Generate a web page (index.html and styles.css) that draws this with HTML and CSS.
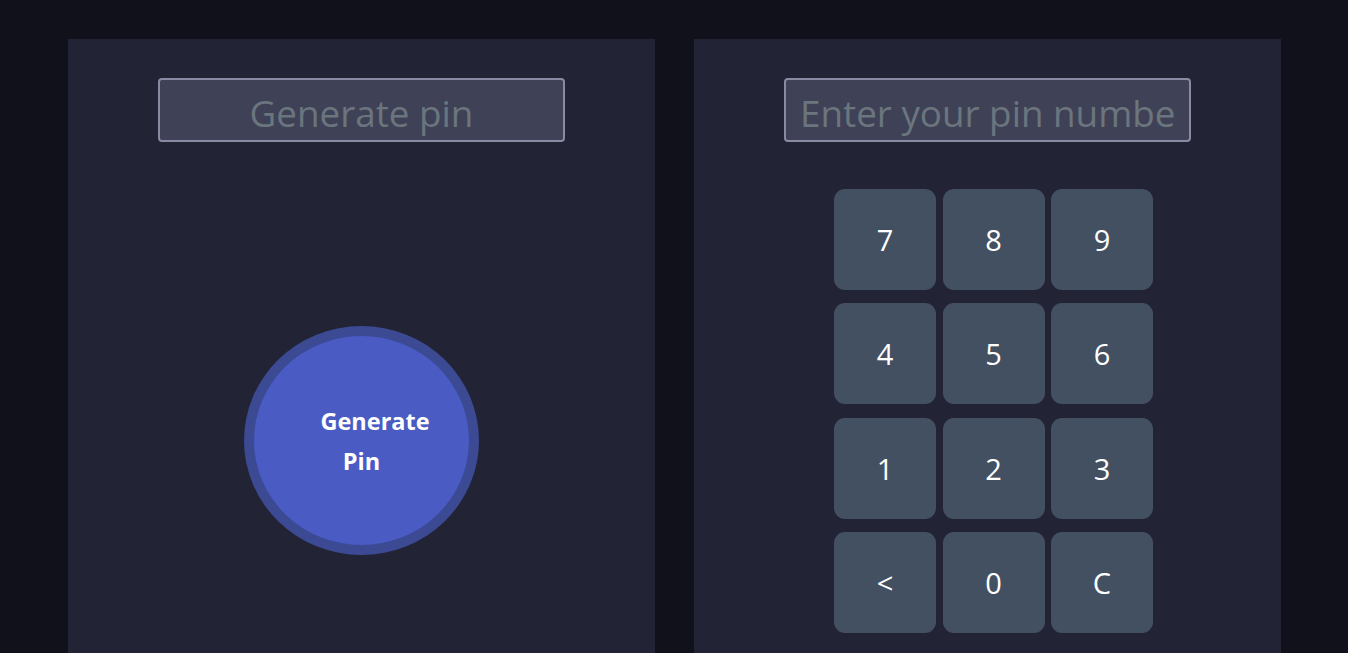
FILE: index.html
```html
<!DOCTYPE html>
<html lang="en">
<head>
  <meta charset="UTF-8" />
  <meta name="viewport" content="width=device-width, initial-scale=1" />
  <title>Pin Matcher</title>
  <link rel="stylesheet" href="styles.css">
</head>
<body>

<div class="container">
  <div class="panel">
    <input type="text" class="pin-input center" placeholder="Generate pin" readonly>
    <button class="generate-btn">Generate Pin</button>
  </div>

  <div class="panel">
    <input type="text" class="pin-input" placeholder="Enter your pin number">
    <div class="keypad">
      <button class="key">7</button>
      <button class="key">8</button>
      <button class="key">9</button>
      <button class="key">4</button>
      <button class="key">5</button>
      <button class="key">6</button>
      <button class="key">1</button>
      <button class="key">2</button>
      <button class="key">3</button>
      <button class="key">&lt;</button>
      <button class="key">0</button>
      <button class="key">C</button>
    </div>
  </div>
</div>

</body>
</html>
```

FILE: styles.css
```css
body {
  font-family: "Open Sans", "Noto Sans", sans-serif;
  background-color: #11111b;
  margin: 0;
  padding: 0;
}
.container {
  display: flex;
  gap: 39px;
  padding: 39px 67px 0 68px;
}
.panel {
  flex: 1;
  height: 700px;
  background-color: #222335;
  display: flex;
  flex-direction: column;
  align-items: center;
  padding-top: 39px;
  box-sizing: border-box;
}
.pin-input {
  width: 407px;
  height: 64px;
  box-sizing: border-box;
  background-color: #3f4256;
  border: 2px solid #8b8aa3;
  border-radius: 4px;
  padding: 5px 14px 0;
  font-family: inherit;
  font-size: 36.8px;
  color: #fff;
  outline: none;
}
.pin-input::placeholder {
  color: #6b757e;
}
.pin-input.center {
  text-align: center;
}
.generate-btn {
  margin-top: 184px;
  width: 235px;
  height: 229px;
  border-radius: 50%;
  background-color: #4a5bc4;
  border: 10px solid #3b4a93;
  color: #fff;
  font-family: inherit;
  font-size: 23.5px;
  font-weight: 700;
  line-height: 40px;
  padding: 0 36px;
  text-indent: 27px;
  cursor: pointer;
}
.keypad {
  margin-top: 47px;
  margin-left: 12px;
  display: grid;
  grid-template-columns: repeat(3, 102px);
  grid-auto-rows: 101px;
  column-gap: 6.5px;
  row-gap: 13.4px;
}
.key {
  background-color: #435061;
  border: none;
  border-radius: 11px;
  color: #fff;
  font-family: inherit;
  font-size: 29px;
  cursor: pointer;
}
```
